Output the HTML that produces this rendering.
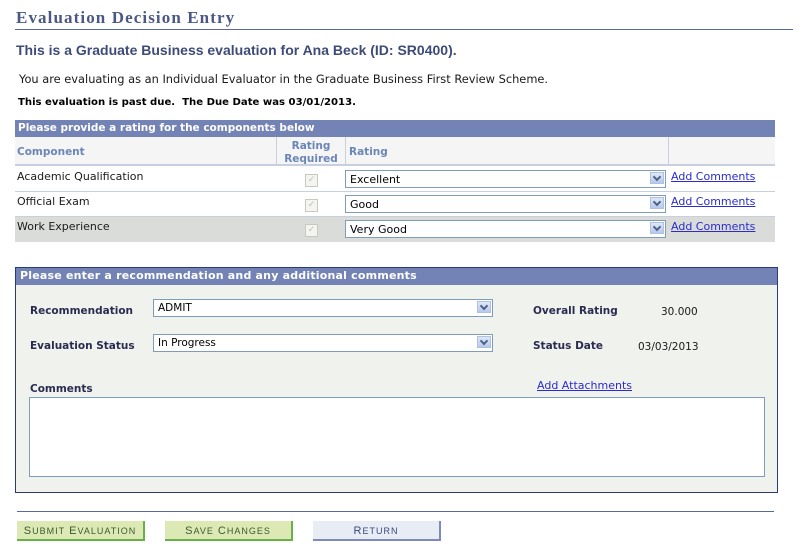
<!DOCTYPE html>
<html><head><style>
body{margin:0;width:802px;height:551px;background:#fff;position:relative;font-family:"DejaVu Sans",Verdana,sans-serif;overflow:hidden}
.a{position:absolute;white-space:nowrap}
.sel{position:absolute;height:16px;border:1px solid #7f9db9;background:#fff;font-size:10.5px;line-height:16px;padding-left:4px;box-sizing:border-box;color:#000}
.sel:after{content:"";position:absolute;right:1px;top:1px;width:14px;height:12px;background:linear-gradient(#dfe8f8,#b7c8ec);border:1px solid #b0c0e0;box-sizing:border-box}
.sel i{position:absolute;right:5px;top:3px;width:4px;height:4px;border-right:2px solid #4d6185;border-bottom:2px solid #4d6185;transform:rotate(45deg);z-index:2}
.cb{position:absolute;width:11px;height:11px;border:1px solid #c8c8c0;background:#f4f4f0;font-size:9px;line-height:11px;text-align:center;color:#c0c0b8}
.lnk{color:#2b2bd0;text-decoration:underline;font-size:11px}
.lab{color:#2b2b50;font-weight:bold;font-size:10.5px}
.btn{position:absolute;top:521px;height:20px;font-family:"Liberation Sans",Arial,sans-serif;font-size:11px;letter-spacing:1px;text-align:center;line-height:21px;box-sizing:border-box}
</style></head><body>
<div class="a" style="left:16px;top:8px;font-family:'Liberation Serif',serif;font-weight:bold;font-size:17px;color:#4b5884;letter-spacing:1.1px">Evaluation Decision Entry</div>
<div class="a" style="left:15px;top:29px;width:778px;height:1px;background:#5868a0"></div>
<div class="a" style="left:16px;top:42px;font-family:'Liberation Sans',Arial,sans-serif;font-weight:bold;font-size:14px;color:#3e4b78">This is a Graduate Business evaluation for Ana Beck (ID: SR0400).</div>
<div class="a" style="left:19px;top:72px;font-size:11.4px;color:#1a1a1a">You are evaluating as an Individual Evaluator in the Graduate Business First Review Scheme.</div>
<div class="a" style="left:18px;top:97px;font-size:10.1px;font-weight:bold;color:#000">This evaluation is past due.&nbsp; The Due Date was 03/01/2013.</div>
<div class="a" style="left:15px;top:120px;width:760px;height:17px;background:#7383b5;color:#fff;font-weight:bold;font-size:10.5px;line-height:17px;padding-left:3px;box-sizing:border-box">Please provide a rating for the components below</div>
<div class="a" style="left:15px;top:137px;width:760px;height:29px;background:#f5f5f5;border-bottom:2px solid #c8d0e0;box-sizing:border-box"></div>
<div class="a" style="left:276px;top:137px;width:1px;height:28px;background:#c8d0e0"></div>
<div class="a" style="left:345px;top:137px;width:1px;height:28px;background:#c8d0e0"></div>
<div class="a" style="left:668px;top:137px;width:1px;height:28px;background:#c8d0e0"></div>
<div class="a" style="left:17px;top:146px;font-size:10.5px;font-weight:bold;color:#6a86b8">Component</div>
<div class="a" style="left:277px;top:140px;width:68px;text-align:center;font-size:10.5px;font-weight:bold;color:#6a86b8;line-height:13px;white-space:normal">Rating<br>Required</div>
<div class="a" style="left:349px;top:146px;font-size:10.5px;font-weight:bold;color:#6a86b8">Rating</div>
<div class="a" style="left:15px;top:191px;width:760px;height:1px;background:#c8d0e0"></div>
<div class="a" style="left:15px;top:216px;width:760px;height:1px;background:#c8d0e0"></div>
<div class="a" style="left:15px;top:217px;width:760px;height:25px;background:#d9dcd9"></div>
<div class="a" style="left:17px;top:170px;font-size:11px;color:#1a1a1a">Academic Qualification</div>
<div class="a" style="left:17px;top:195px;font-size:11px;color:#1a1a1a">Official Exam</div>
<div class="a" style="left:17px;top:220px;font-size:11px;color:#1a1a1a">Work Experience</div>
<div class="cb" style="left:305px;top:174px">✓</div>
<div class="cb" style="left:305px;top:199px">✓</div>
<div class="cb" style="left:305px;top:224px">✓</div>
<div class="sel" style="left:345px;top:170px;width:321px;height:18px;line-height:17px;font-size:11px">Excellent<i></i></div>
<div class="sel" style="left:345px;top:195px;width:321px;height:18px;line-height:17px;font-size:11px">Good<i></i></div>
<div class="sel" style="left:345px;top:220px;width:321px;height:18px;line-height:17px;font-size:11px">Very Good<i></i></div>
<div class="a lnk" style="left:671px;top:170px">Add Comments</div>
<div class="a lnk" style="left:671px;top:195px">Add Comments</div>
<div class="a lnk" style="left:671px;top:220px">Add Comments</div>

<div class="a" style="left:15px;top:267px;width:763px;height:226px;background:#f0f2ee;border:1px solid #2a3c78;box-sizing:border-box"></div>
<div class="a" style="left:16px;top:268px;width:761px;height:17px;background:#7383b5;color:#fff;font-weight:bold;font-size:11px;line-height:16px;padding-left:4px;box-sizing:border-box;letter-spacing:0.2px">Please enter a recommendation and any additional comments</div>
<div class="a lab" style="left:30px;top:305px">Recommendation</div>
<div class="a lab" style="left:30px;top:340px">Evaluation Status</div>
<div class="sel" style="left:153px;top:299px;width:340px;height:18px;line-height:16px">ADMIT<i></i></div>
<div class="sel" style="left:153px;top:334px;width:340px;height:18px;line-height:16px">In Progress<i></i></div>
<div class="a lab" style="left:533px;top:305px">Overall Rating</div>
<div class="a" style="left:661px;top:306px;font-size:10.5px;color:#1a1a1a">30.000</div>
<div class="a lab" style="left:533px;top:340px">Status Date</div>
<div class="a" style="left:638px;top:341px;font-size:10.5px;color:#1a1a1a">03/03/2013</div>
<div class="a lab" style="left:30px;top:383px">Comments</div>
<div class="a lnk" style="left:537px;top:379px">Add Attachments</div>
<div class="a" style="left:29px;top:397px;width:736px;height:80px;background:#fff;border:1px solid #7f9db9;box-sizing:border-box"></div>

<div class="a" style="left:17px;top:511px;width:757px;height:1px;background:#5868a0"></div>
<div class="btn" style="left:17px;width:128px;background:#dde9b5;border-right:2px solid #6ab04a;border-bottom:2px solid #6ab04a;color:#3a5a2a">S<span style="font-size:9px">UBMIT</span> E<span style="font-size:9px">VALUATION</span></div>
<div class="btn" style="left:165px;width:128px;background:#dde9b5;border-right:2px solid #6ab04a;border-bottom:2px solid #6ab04a;color:#3a5a2a">S<span style="font-size:9px">AVE</span> C<span style="font-size:9px">HANGES</span></div>
<div class="btn" style="left:313px;width:128px;background:#e8ecf4;border-right:2px solid #7d8ac0;border-bottom:2px solid #7d8ac0;color:#3a4a78">R<span style="font-size:9px">ETURN</span></div>
</body></html>
